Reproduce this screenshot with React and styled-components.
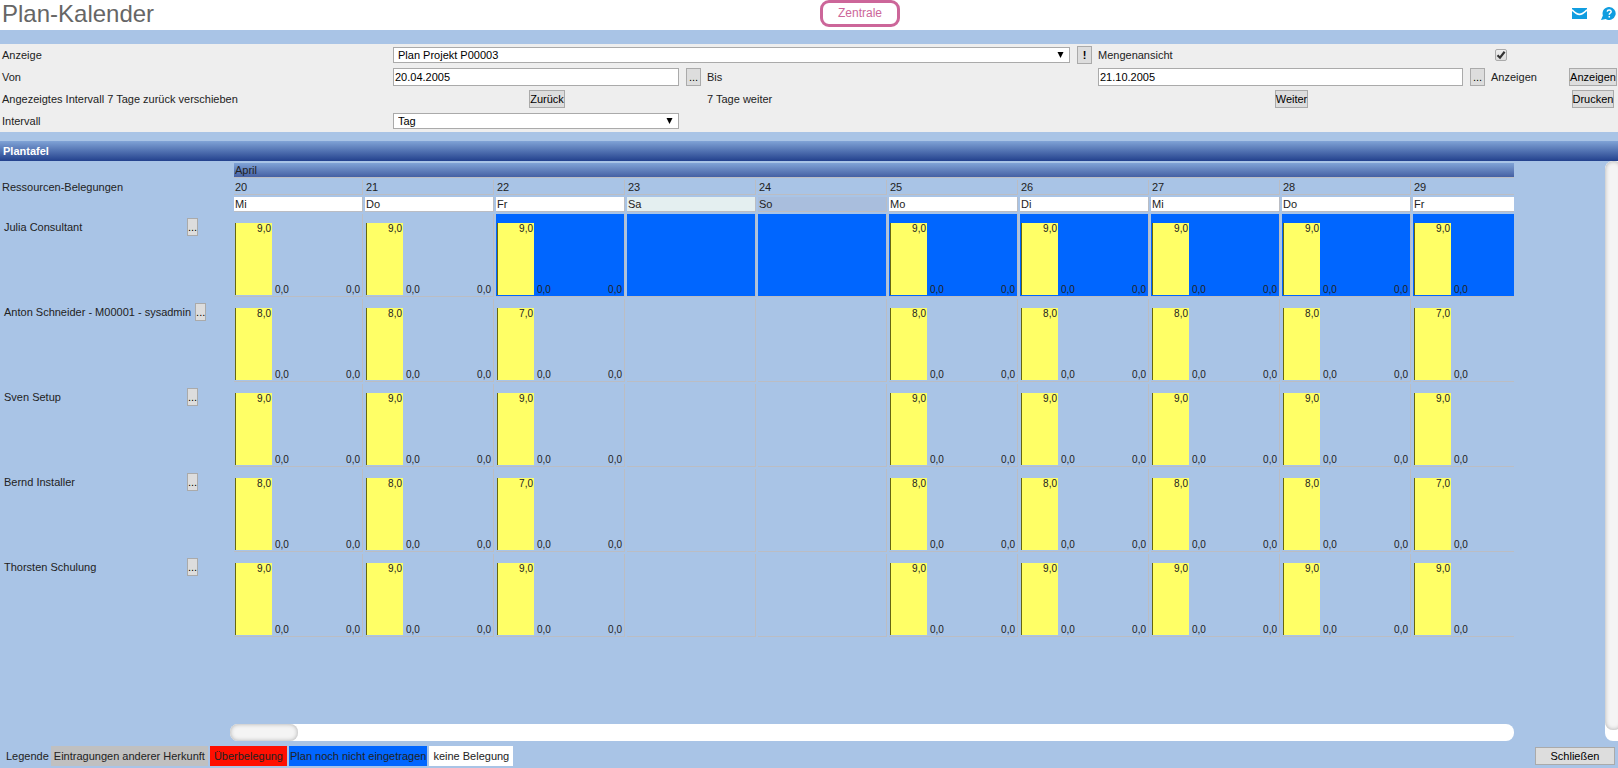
import React, {useState} from 'react'
import styled, {createGlobalStyle} from 'styled-components'

const GlobalStyle = createGlobalStyle`
    * {
        box-sizing: border-box;
    }
    body {
        margin: 0;
        background: #a9c4e6;
        color: #222;
        font-family: "Liberation Sans", Arial, sans-serif;
        font-size: 11px;
    }
    input, select, button {
        margin: 0;
        color: #000;
        font-family: inherit;
        font-size: inherit;
    }
`

const Page = styled.div`
    display: flex;
    flex-flow: column;
    min-height: 100vh;
`

const Header = styled.header`
    display: grid;
    grid-template-columns: 1fr auto 1fr;
    height: 30px;
    background: #fff;
`

const Title = styled.h1`
    margin: 0;
    padding-left: 2px;
    font-size: 24px;
    font-weight: normal;
    line-height: 28px;
    color: #666;
`

const SiteBadge = styled.div`
    height: 27px;
    margin-left: 102px;
    padding: 0 15px;
    border: 3px solid #cc6699;
    border-radius: 9px;
    line-height: 20px;
    font-size: 12px;
    color: #cc6699;
`

const HeaderLinks = styled.nav`
    display: flex;
    justify-content: flex-end;
    align-items: center;
    gap: 14px;
    height: 26px;
    padding-right: 2px;
`

const IconLink = styled.a`
    display: flex;
`

const Filter = styled.form`
    display: grid;
    grid-template-columns: 391fr 314fr 391fr 393fr 79fr 50fr;
    grid-template-rows: repeat(4, 22px);
    margin: 14px 0 9px;
    background: #eee;
`

const Field = styled.div`
    display: flex;
    align-items: center;
    justify-content: ${props => props.$align || 'flex-start'};
    gap: 7px;
    min-width: 0;
    padding: 0 ${props => props.$short ? '26px' : '4px'} 0 2px;
    grid-column: span ${props => props.$span || 1};
`

const EndField = styled(Field)`
    justify-content: center;
    padding: 0;
    white-space: nowrap;
`

const TextInput = styled.input`
    flex: 1;
    min-width: 0;
    height: 18px;
    padding: 0 1px;
    border: 1px solid #aaa;
    border-radius: 0;
    background: #fff;
`

const SelectBox = styled.div`
    position: relative;
    display: flex;
    flex: 1;
    min-width: 0;
`

const SelectInput = styled.select`
    flex: 1;
    min-width: 0;
    height: 16px;
    padding: 0 4px;
    border: 1px solid #aaa;
    border-radius: 0;
    background: #fff;
    appearance: none;
`

const SelectArrow = styled.svg`
    position: absolute;
    top: 5px;
    right: 6px;
    pointer-events: none;
`

const CheckBox = styled.span`
    position: relative;
    display: flex;
    margin-left: 4px;
    svg {
        position: absolute;
        top: 0;
        left: 0;
        pointer-events: none;
    }
`

const CheckInput = styled.input`
    width: 12px;
    height: 12px;
    border: 1px solid #aaa;
    border-radius: 2px;
    background: linear-gradient(#eee, #ddd);
    appearance: none;
`

const Button = styled.button`
    height: 18px;
    padding: 0;
    border: 1px solid #aaa;
    border-radius: 0;
    background: #ddd;
    white-space: nowrap;
`

const MoreButton = styled(Button)`
    flex: none;
    width: ${props => props.$narrow ? '11px' : '15px'};
    font-weight: ${props => props.$bold ? 'bold' : 'normal'};
`

const CloseButton = styled(Button)`
    width: 80px;
    margin-left: auto;
`

const BoardTitle = styled.h2`
    margin: 0;
    padding-left: 3px;
    font-size: 11px;
    line-height: 20px;
    color: #fff;
    background: linear-gradient(#80a3d6, #23418d);
`

const Board = styled.main`
    display: flex;
    flex: 1;
`

const BoardBody = styled.div`
    display: flex;
    flex-flow: column;
    flex: 1;
    min-width: 0;
    padding-right: 91px;
`

const BoardView = styled.div`
    flex: 1;
    overflow: hidden;
`

const PlanTable = styled.table`
    width: 1544px;
    table-layout: fixed;
    border-collapse: separate;
    border-spacing: 2px;
    line-height: 12px;
`

const NameColumn = styled.col`
    width: 230px;
`

const HeadCell = styled.th`
    height: 15px;
    padding: 0 1px;
    border-right: 1px solid #bbbdc3;
    border-bottom: 1px solid #bbbdc3;
    font-weight: normal;
    text-align: left;
    background: ${props => props.$color || 'transparent'};
    background-clip: padding-box;
`

const MonthCell = styled(HeadCell)`
    background: linear-gradient(#80a3d6, #4560a3);
`

const CornerCell = styled.th`
    padding: 0 0 1px;
    font-weight: normal;
    text-align: left;
`

const NameCell = styled.th`
    padding: 4px 0 0 2px;
    font-weight: normal;
    text-align: left;
    vertical-align: top;
`

const NameBox = styled.div`
    display: flex;
    align-items: center;
    gap: 4px;
`

const Name = styled.span`
    min-width: 179px;
    white-space: nowrap;
`

const DayCell = styled.td`
    height: 83px;
    padding: 0 2px 1px 1px;
    border-right: 1px solid #bbbdc3;
    border-bottom: 1px solid #bbbdc3;
    vertical-align: bottom;
    font-size: 10px;
    background: ${props => props.$missing ? '#0066ff' : 'transparent'};
    background-clip: padding-box;
`

const Bars = styled.div`
    display: flex;
    align-items: flex-end;
    gap: 3px;
`

const Bar = styled.div`
    width: 37px;
    height: 72px;
    padding-right: 1px;
    border-left: 1px solid #666611;
    text-align: right;
    background: #ffff66;
`

const EmptyBar = styled.div`
    line-height: 10px;
    & + & {
        margin-left: auto;
    }
`

const ScrollX = styled.div`
    height: 17px;
    margin-left: 230px;
    border-radius: 8px;
    background: #fff;
`

const ThumbX = styled.div`
    width: 68px;
    height: 17px;
    border-radius: 8px;
    background: #f4f4f4;
    box-shadow: inset 0 0 4px #aaa;
`

const ScrollY = styled.div`
    display: flex;
    width: 13px;
    padding-bottom: 11px;
    border-radius: 8px 0 0 8px;
    overflow: hidden;
    background: #fff;
`

const ThumbY = styled.div`
    flex: none;
    width: 17px;
    border-radius: 8px;
    background: #f4f4f4;
    box-shadow: inset 0 0 4px #aaa;
`

const Footer = styled.footer`
    display: flex;
    align-items: center;
    gap: 2px;
    padding: 5px 3px 2px 6px;
    line-height: 20px;
`

const LegendItem = styled.span`
    padding: 0 ${props => props.$pad};
    background: ${props => props.$color};
`

const days = [
    {date: 20, name: 'Mi'},
    {date: 21, name: 'Do'},
    {date: 22, name: 'Fr'},
    {date: 23, name: 'Sa', color: '#e4eff0', free: true},
    {date: 24, name: 'So', color: '#a9bedd', free: true},
    {date: 25, name: 'Mo'},
    {date: 26, name: 'Di'},
    {date: 27, name: 'Mi'},
    {date: 28, name: 'Do'},
    {date: 29, name: 'Fr', last: true},
]

const resources = [
    {name: 'Julia Consultant', hours: '9,0', friday: '9,0', missingFrom: 22},
    {name: 'Anton Schneider - M00001 - sysadmin', hours: '8,0', friday: '7,0'},
    {name: 'Sven Setup', hours: '9,0', friday: '9,0'},
    {name: 'Bernd Installer', hours: '8,0', friday: '7,0'},
    {name: 'Thorsten Schulung', hours: '9,0', friday: '9,0'},
]

const legend = [
    {text: 'Eintragungen anderer Herkunft', color: '#c0c0c0', pad: '3px'},
    {text: 'Überbelegung', color: '#ff0f00', pad: '4px'},
    {text: 'Plan noch nicht eingetragen', color: '#0066ff', pad: '1px'},
    {text: 'keine Belegung', color: '#fff', pad: '4px'},
]

const Select = ({id, options}) => (
    <SelectBox>
        <SelectInput id={id}>
            {options.map(option => <option key={option}>{option}</option>)}
        </SelectInput>
        <SelectArrow width="7" height="6" viewBox="0 0 7 6">
            <path d="M0.5 0h6L3.5 6z" fill="#000"/>
        </SelectArrow>
    </SelectBox>
)

const MailIcon = () => (
    <svg width="15" height="11" viewBox="0 0 15 11">
        <rect width="15" height="11" fill="#109de0"/>
        <path d="M0 1.8Q4.5 6.4 7.5 6.4T15 1.8" fill="none" stroke="#fff" strokeWidth="1.8"/>
    </svg>
)

const HelpIcon = () => (
    <svg width="15" height="13" viewBox="0 0 15 13">
        <path d="M8.3 0a6.5 6.5 0 1 1-3.6 12L0 13l1.9-4.4A6.5 6.5 0 0 1 8.3 0z" fill="#109de0"/>
        <path d="M6.2 4.6Q6.4 2.9 8.2 2.9T10.2 4.5Q10.2 5.5 9.2 6.1T8.3 7.8M8.3 8.9v1.5" fill="none" stroke="#fff" strokeWidth="1.5"/>
    </svg>
)

function App() {
    const [amounts, setAmounts] = useState(true)
    const [from, setFrom] = useState('20.04.2005')
    const [to, setTo] = useState('21.10.2005')

    const renderDay = (resource, day) => {
        const missing = resource.missingFrom !== undefined && day.date >= resource.missingFrom
        return (
            <DayCell key={day.date} $missing={missing}>
                {!day.free && (
                    <Bars>
                        <Bar>{day.name === 'Fr' ? resource.friday : resource.hours}</Bar>
                        <EmptyBar>0,0</EmptyBar>
                        {!day.last && <EmptyBar>0,0</EmptyBar>}
                    </Bars>
                )}
            </DayCell>
        )
    }

    return (
        <Page>
            <GlobalStyle/>
            <Header>
                <Title>Plan-Kalender</Title>
                <SiteBadge>Zentrale</SiteBadge>
                <HeaderLinks>
                    <IconLink href="#mail" aria-label="Nachrichten"><MailIcon/></IconLink>
                    <IconLink href="#help" aria-label="Hilfe"><HelpIcon/></IconLink>
                </HeaderLinks>
            </Header>

            <Filter onSubmit={e => e.preventDefault()}>
                <Field><label htmlFor="view">Anzeige</label></Field>
                <Field $span={2}>
                    <Select id="view" options={['Plan Projekt P00003']}/>
                    <MoreButton type="button" $bold>!</MoreButton>
                </Field>
                <Field><label htmlFor="amounts">Mengenansicht</label></Field>
                <Field $span={2}>
                    <CheckBox>
                        <CheckInput
                            id="amounts"
                            type="checkbox"
                            checked={amounts}
                            onChange={() => setAmounts(!amounts)}
                        />
                        {amounts && (
                            <svg width="12" height="12" viewBox="0 0 12 12">
                                <path d="M2.5 6.2L5 8.7L9.6 2.8" fill="none" stroke="#333" strokeWidth="2.2"/>
                            </svg>
                        )}
                    </CheckBox>
                </Field>

                <Field><label htmlFor="from">Von</label></Field>
                <Field>
                    <TextInput id="from" value={from} onChange={e => setFrom(e.target.value)}/>
                    <MoreButton type="button">...</MoreButton>
                </Field>
                <Field><label htmlFor="to">Bis</label></Field>
                <Field>
                    <TextInput id="to" value={to} onChange={e => setTo(e.target.value)}/>
                    <MoreButton type="button">...</MoreButton>
                </Field>
                <Field><label htmlFor="show">Anzeigen</label></Field>
                <EndField><Button id="show">Anzeigen</Button></EndField>

                <Field><label htmlFor="back">Angezeigtes Intervall 7 Tage zurück verschieben</label></Field>
                <Field $align="center"><Button id="back" type="button">Zurück</Button></Field>
                <Field><label htmlFor="next">7 Tage weiter</label></Field>
                <Field $align="center"><Button id="next" type="button">Weiter</Button></Field>
                <Field/>
                <EndField><Button type="button">Drucken</Button></EndField>

                <Field><label htmlFor="interval">Intervall</label></Field>
                <Field $short><Select id="interval" options={['Tag', 'Woche', 'Monat']}/></Field>
            </Filter>

            <BoardTitle>Plantafel</BoardTitle>
            <Board>
                <BoardBody>
                    <BoardView>
                        <PlanTable>
                            <colgroup>
                                <NameColumn/>
                                {days.map(day => <col key={day.date}/>)}
                            </colgroup>
                            <thead>
                                <tr>
                                    <CornerCell/>
                                    <MonthCell colSpan={days.length}>April</MonthCell>
                                </tr>
                                <tr>
                                    <CornerCell>Ressourcen-Belegungen</CornerCell>
                                    {days.map(day => <HeadCell key={day.date}>{day.date}</HeadCell>)}
                                </tr>
                                <tr>
                                    <CornerCell/>
                                    {days.map(day => (
                                        <HeadCell key={day.date} $color={day.color || '#fff'}>{day.name}</HeadCell>
                                    ))}
                                </tr>
                            </thead>
                            <tbody>
                                {resources.map(resource => (
                                    <tr key={resource.name}>
                                        <NameCell>
                                            <NameBox>
                                                <Name>{resource.name}</Name>
                                                <MoreButton type="button" $narrow>...</MoreButton>
                                            </NameBox>
                                        </NameCell>
                                        {days.map(day => renderDay(resource, day))}
                                    </tr>
                                ))}
                            </tbody>
                        </PlanTable>
                    </BoardView>
                    <ScrollX><ThumbX/></ScrollX>
                </BoardBody>
                <ScrollY><ThumbY/></ScrollY>
            </Board>

            <Footer>
                <span>Legende</span>
                {legend.map(item => (
                    <LegendItem key={item.text} $color={item.color} $pad={item.pad}>{item.text}</LegendItem>
                ))}
                <CloseButton type="button">Schließen</CloseButton>
            </Footer>
        </Page>
    )
}

export default App
